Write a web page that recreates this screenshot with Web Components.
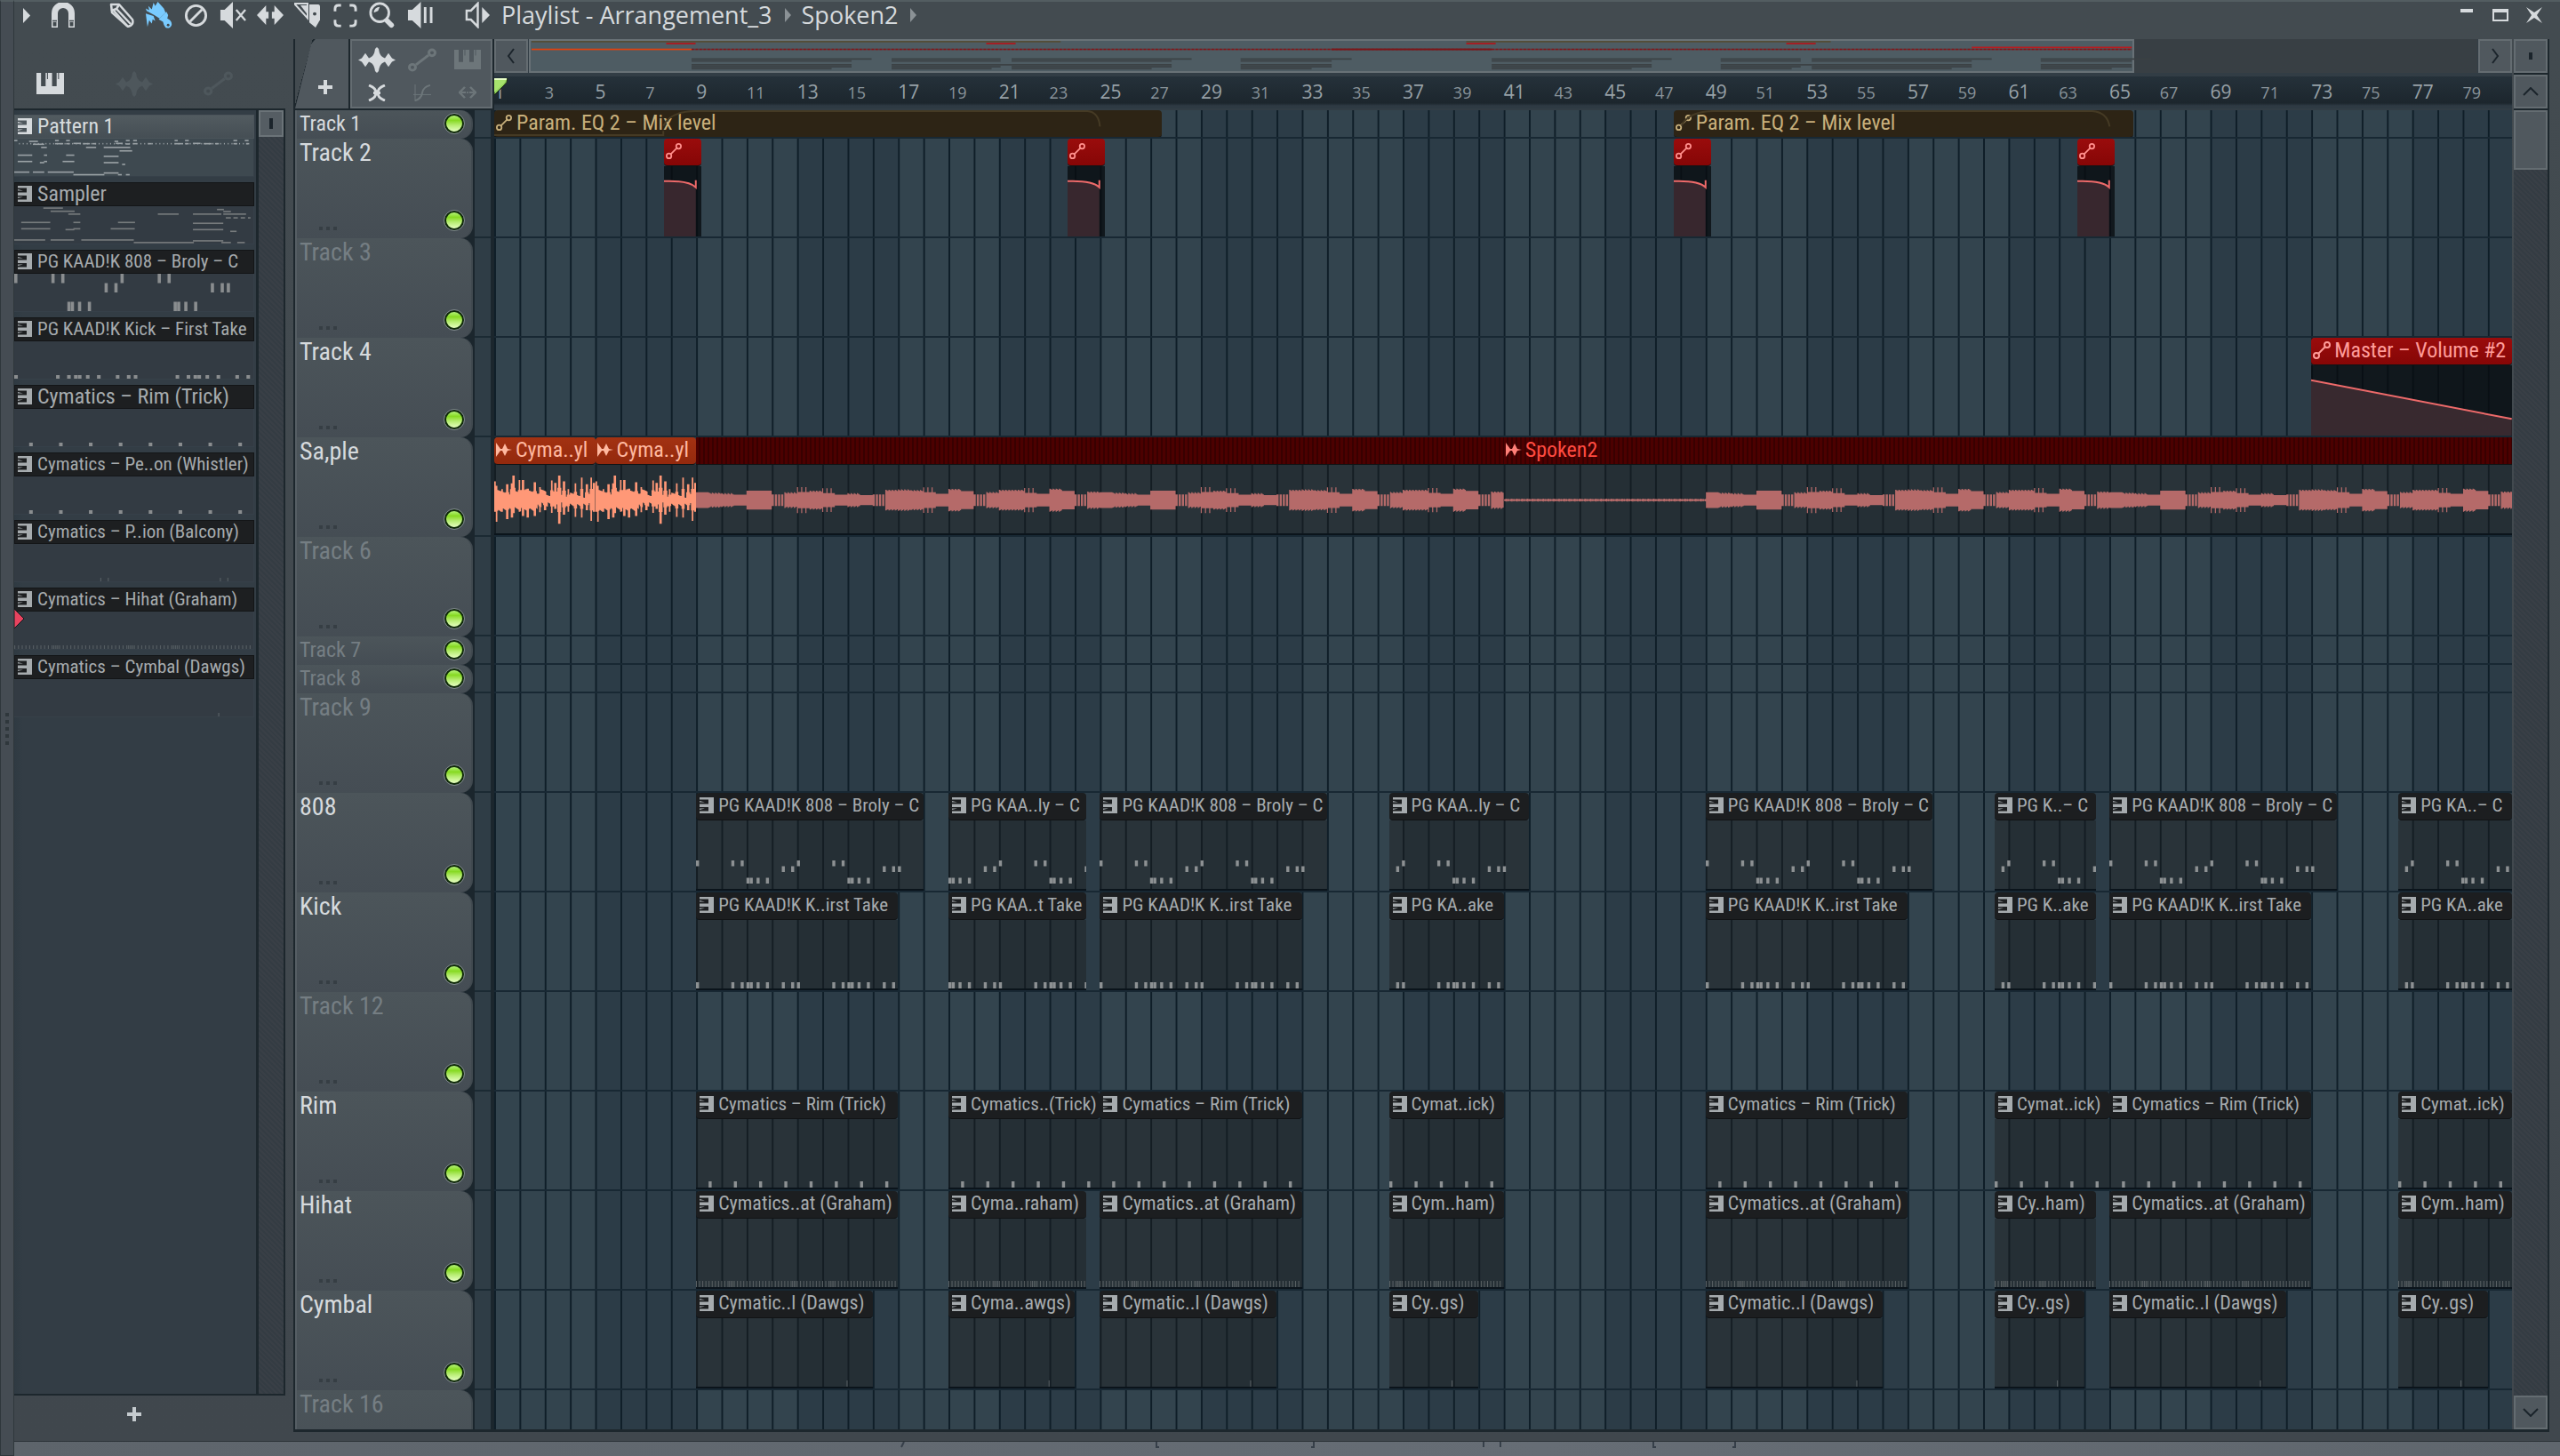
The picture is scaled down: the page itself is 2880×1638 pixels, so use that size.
<!DOCTYPE html>
<html lang="en">
<head>
<meta charset="utf-8">
<title>Playlist - Arrangement_3</title>
<style>
    html, body {
        margin: 0;
        height: 100%;
        overflow: hidden;
        background: #40484d;
    }
    body {
        font-family: "Roboto Condensed", "Open Sans Condensed", "Liberation Sans", sans-serif;
        color: #d6dadd;
    }
</style>
</head>
<body>
<playlist-window></playlist-window>

<script>
const BARS = 79.95;

// viewBox + markup of every glyph used in the window
const ICONS = {
    play: ['0 0 10 18', '<path d="M0 0L9 9L0 18Z" fill="currentColor"/>'],
    magnet: ['0 0 26 28', '<path d="M3.500 28V12a9.500 9.500 0 0 1 19 0V28" fill="none" stroke="currentColor" stroke-width="7"/><path d="M1 20.500h5M20 20.500h5" stroke="#40484d" stroke-width="1.500"/><path d="M1.500 22h4v4.500h-4zM20.500 22h4v4.500h-4z" fill="#40484d"/>'],
    pencil: ['0 0 28 28', '<g fill="none" stroke="currentColor" stroke-width="2.500" stroke-linejoin="round"><path d="M2 2L11 2L26 19Q28 25 21 27L3 11Z"/><path d="M11 2L8 7L2 9M8 7L24 24M5 9L20 26"/></g>'],
    brush: ['0 0 32 32', '<path d="M10 1L12 5L15 0L22 8L24 13L17 20L11 16L2 11L1 8L5 10L4 5L8 9Z" fill="currentColor"/><path d="M16 21L25 12L27 16L26 20Q32 23 31 28Q29 33 24 31Q22 29 21 24Z" fill="currentColor"/><path d="M1 14L10 17L12 23L9 21L8 26L5 22L3 30Z" fill="currentColor"/><circle cx="27" cy="28" r="1.500" fill="#40484d"/>'],
    ban: ['0 0 28 28', '<circle cx="14" cy="14" r="11.500" fill="none" stroke="currentColor" stroke-width="3"/><path d="M7 21L21 7" stroke="currentColor" stroke-width="3"/>'],
    mute: ['0 0 32 30', '<path d="M1 9h5L16 0V30L6 21H1Z" fill="currentColor"/><path d="M20 9L31 21M31 9L20 21" stroke="currentColor" stroke-width="2.500"/>'],
    slip: ['0 0 32 26', '<path d="M0 13L11 1V9h3V17h-3V25ZM32 13L21 1V9h-3V17h3V25Z" fill="currentColor"/>'],
    knife: ['0 0 30 30', '<path d="M0 1L15 18V1Z" fill="none" stroke="currentColor" stroke-width="2"/><path d="M7 3L15 14V3Z" fill="currentColor"/><path d="M17 2h10q2 0 2 3V20L24 29L17 23Z" fill="currentColor"/><circle cx="23" cy="13" r="2" fill="#40484d"/>'],
    select: ['0 0 28 28', '<path d="M2 9V6q0-4 4-4h3M19 2h3q4 0 4 4v3M26 19v3q0 4-4 4h-3M9 26H6q-4 0-4-4v-3" fill="none" stroke="currentColor" stroke-width="3"/>'],
    zoom: ['0 0 32 32', '<circle cx="13" cy="13" r="11" fill="none" stroke="currentColor" stroke-width="3"/><path d="M6 13A7 7 0 0 1 13 6L11 11Z" fill="currentColor"/><path d="M22 23L27 28" stroke="currentColor" stroke-width="6" stroke-linecap="round"/>'],
    playback: ['0 0 30 30', '<path d="M1 9h5L16 0V30L6 21H1Z" fill="currentColor"/><path d="M21 6V24M28 6V24" stroke="currentColor" stroke-width="3"/>'],
    speaker: ['0 0 30 30', '<path d="M2 10h5L15 2V28L7 20H2Z" fill="none" stroke="currentColor" stroke-width="2.500"/><path d="M20 6L29 15L20 24Z" fill="currentColor"/>'],
    piano: ['0 0 30 24', '<path d="M0 0h5V15h5V0h1.500V7l1 0V0H17l0 0V15h5V0h1.500V7h1V0H30V24H0Z" fill="currentColor"/>'],
    wave: ['0 0 42 30', '<path d="M0 15L4 13L8 7L12 13L14 12Q18 10 19 2L21 0L23 2Q24 10 28 12L30 13L34 7L38 13L42 15L38 17L34 23L30 17L28 18Q24 20 23 28L21 30L19 28Q18 20 14 18L12 17L8 23L4 17Z" fill="currentColor"/>'],
    automation: ['0 0 32 28', '<g fill="none" stroke="currentColor" stroke-width="3"><circle cx="5" cy="22.500" r="3.500"/><circle cx="27" cy="5.500" r="3.500"/><path d="M9 19.500L23 8.500"/></g>'],
    cross: ['0 0 20 20', '<path d="M1 1Q9 4 9 10T1 19M19 1Q11 4 11 10T19 19M6 10h8" fill="none" stroke="currentColor" stroke-width="3"/>'],
    curve: ['0 0 20 20', '<path d="M2 0V20M0 12H20" stroke="currentColor" stroke-width="1"/><path d="M2 19Q9 17 10 10T19 1" fill="none" stroke="currentColor" stroke-width="2"/>'],
    stretch: ['0 0 20 16', '<path d="M7 1L1 8L7 15M13 1L19 8L13 15M3 8H8M12 8H17" fill="none" stroke="currentColor" stroke-width="2.500"/><path d="M9 7h2v2h-2z" fill="currentColor"/>'],
    plus: ['0 0 16 16', '<path d="M8 0V16M0 8H16" stroke="currentColor" stroke-width="4"/>'],
    left: ['0 0 10 18', '<path d="M8 1L2 9L8 17" fill="none" stroke="currentColor" stroke-width="2"/>'],
    right: ['0 0 10 18', '<path d="M2 1L8 9L2 17" fill="none" stroke="currentColor" stroke-width="2"/>'],
    up: ['0 0 18 10', '<path d="M1 9L9 1L17 9" fill="none" stroke="currentColor" stroke-width="2"/>'],
    down: ['0 0 18 10', '<path d="M1 1L9 9L17 1" fill="none" stroke="currentColor" stroke-width="2"/>'],
    grip: ['0 0 4 12', '<path d="M0 0h4v12H0z" fill="currentColor"/>'],
    minimize: ['0 0 18 18', '<path d="M2 2h14v4H2z" fill="currentColor"/>'],
    maximize: ['0 0 18 14', '<path d="M1 2h16v11H1z" fill="none" stroke="currentColor" stroke-width="2"/><path d="M0 0h18v4H0z" fill="currentColor"/>'],
    close: ['0 0 18 18', '<path d="M0 0L9 6L18 0L12 9L18 18L9 12L0 18L6 9Z" fill="currentColor"/>'],
    pattern: ['0 0 16 18', '<path d="M0 0H16V18H0V15.500H10V11H0V7.500H10V2.500H0Z" fill="currentColor"/><path d="M0 4L6 5.500H0ZM0 14L6 12.500H0Z" fill="currentColor"/>'],
    clipAuto: ['0 0 20 20', '<g fill="none" stroke="currentColor" stroke-width="2"><circle cx="4" cy="16" r="3"/><circle cx="16" cy="4" r="3"/><path d="M6 14L14 6"/></g>'],
    clipAudio: ['0 0 18 16', '<path d="M0 0L5 7L7 7L10 1L13 7L18 8L13 9L10 15L7 9L5 9L0 16Z" fill="currentColor"/>']
};

function icon(name, width, height) {
    const [box, body] = ICONS[name];
    return `<svg width="${width}" height="${height}" viewBox="${box}" preserveAspectRatio="none" aria-hidden="true">${body}</svg>`;
}

// step times, in bars
const HIGH = [0, 1.4, 1.77, 4, 5.4, 5.77];
const MID = [3.4, 3.77, 7.4, 7.77, 8];
const LOW = [2, 2.13, 2.4, 2.77, 6, 6.13, 6.4, 6.77];

function notesOf(kind) {
    if (kind === '808') {
        return [...HIGH.map(t => [t, 0]), ...MID.map(t => [t, 1]), ...LOW.map(t => [t, 3])];
    }
    if (kind === 'kick') return [...HIGH, ...MID.slice(0, 4), ...LOW].map(t => [t, 0]);
    if (kind === 'rim') return [0, 1, 2, 3, 4, 5, 6, 7].map(t => [t + 0.5, 0]);
    if (kind === 'hihat') {
        const ticks = [];
        for (let i = 0; i < 64; i++) ticks.push([i / 8, 0]);
        [10, 11, 30, 31, 42, 43].forEach(i => ticks.push([i / 8 + 0.06, 0]));
        return ticks;
    }
    if (kind === 'perc') return [2.88, 3.13, 6.88, 7.13].map(t => [t, 0]);
    if (kind === 'cymbal') return [[5.97, 0]];
    return [];
}

function notesSvg(kind, offset, length) {
    const rows = kind === '808' ? 4 : 1;
    const thin = ['hihat', 'perc', 'cymbal'].includes(kind);
    const width = thin ? 0.035 : 0.12;
    const rects = notesOf(kind)
        .filter(([t]) => t >= offset && t < offset + length)
        .map(([t, row]) => `<rect x="${(t - offset).toFixed(3)}" y="${row}" width="${width}" height="1"/>`)
        .join('');
    return `<svg class="notes ${thin ? 'thin' : ''} rows${rows}" viewBox="0 0 ${length} ${rows}" preserveAspectRatio="none">${rects}</svg>`;
}

// half heights for each half bar of the vocal, over 16 bars: [height, shape]
const VOCAL = [
    [27], [26, 'j'], [24, 'j'], [19], [33], [33], [20, 's'], [27, 'j'],
    [28, 'p'], [33, 'j'], [24, 'p'], [19], [24, 'j'], [17], [20, 's'], [36, 'j'],
    [37, 'j'], [35, 'j'], [27, 'p'], [22], [39, 'j'], [31], [20, 's'], [28, 'j'],
    [36, 'j'], [36, 'j'], [25, 'p'], [22], [40, 'j'], [32], [20, 's'], [30, 'j']
];

function vocalPath(from, to) {
    let d = '';
    const step = 1 / 24;
    for (let i = 0; i < (to - from) * 24; i++) {
        const bar = from + i * step;
        const x = (i * step).toFixed(3);
        let h;
        if (bar >= 41 && bar < 49) {
            h = 3 + (i * 7 % 5) * 0.5;
        } else {
            const start = bar < 41 ? 9 : 49;
            const [height, shape] = VOCAL[Math.floor((bar - start) * 2 + 0.001) % 32];
            h = height;
            if (shape === 'j') h -= (i % 3) * 2;
            if (shape === 'p' && i % 4 === 0) h += 17;
            if (shape === 's' && i % 3 === 2) h = 0;
        }
        if (h) d += `M${x} ${50 - h}h${(step * 1.05).toFixed(3)}V${50 + h}h${(-step * 1.05).toFixed(3)}Z`;
    }
    return d;
}

// peaks of the four bar sample: position, up, down
const PEAKS = [
    [0, 65, 40], [5, 50, 75], [19, 38, 40], [32, 55, 66], [48, 85, 45], [44, 58, 60], [63, 70, 40], [72, 70, 55],
    [84, 40, 60], [102, 62, 55], [115, 45, 42], [128, 30, 35], [145, 68, 44], [154, 60, 30], [164, 85, 82],
    [176, 65, 50], [187, 38, 40], [205, 58, 58], [221, 78, 60], [234, 55, 35], [245, 78, 72], [252, 60, 40]
];

function drumPath() {
    let d = '';
    for (let i = 0; i < 128; i++) {
        const x = i * 2;
        let up = 8 + (i * 37 % 19) + (x < 130 ? 12 : 0);
        let down = 8 + (i * 53 % 17) + (x < 110 ? 16 : 0);
        PEAKS.forEach(([at, u, v]) => {
            const near = Math.abs(at - x);
            if (near < 3) {
                up = Math.max(up, u);
                down = Math.max(down, v);
            } else if (near < 5) {
                up = Math.max(up, u * 0.5);
                down = Math.max(down, v * 0.5);
            }
        });
        d += `M${x} ${100 - up}h2V${100 + down}h-2Z`;
    }
    return d;
}

const PIANO_CLIPS = {
    '808': [[9, 18, 0, 'PG KAAD!K 808 – Broly – C'], [19, 24.45, 2, 'PG KAA..ly – C'], [25, 34, 0, 'PG KAAD!K 808 – Broly – C'], [36.45, 42, 3.5, 'PG KAA..ly – C'], [49, 58, 0, 'PG KAAD!K 808 – Broly – C'], [60.45, 64.45, 3.5, 'PG K..– C'], [65, 74, 0, 'PG KAAD!K 808 – Broly – C'], [76.45, 82, 3.5, 'PG KA..– C']],
    kick: [[9, 17, 0, 'PG KAAD!K K..irst Take'], [19, 24.45, 2, 'PG KAA..t Take'], [25, 33, 0, 'PG KAAD!K K..irst Take'], [36.45, 41, 3.5, 'PG KA..ake'], [49, 57, 0, 'PG KAAD!K K..irst Take'], [60.45, 64.45, 3.5, 'PG K..ake'], [65, 73, 0, 'PG KAAD!K K..irst Take'], [76.45, 81, 3.5, 'PG KA..ake']],
    rim: [[9, 17, 0, 'Cymatics – Rim (Trick)'], [19, 25, 2, 'Cymatics..(Trick)'], [25, 33, 0, 'Cymatics – Rim (Trick)'], [36.45, 41, 3.5, 'Cymat..ick)'], [49, 57, 0, 'Cymatics – Rim (Trick)'], [60.45, 65, 3.5, 'Cymat..ick)'], [65, 73, 0, 'Cymatics – Rim (Trick)'], [76.45, 81, 3.5, 'Cymat..ick)']],
    hihat: [[9, 17, 0, 'Cymatics..at (Graham)'], [19, 24.45, 2, 'Cyma..raham)'], [25, 33, 0, 'Cymatics..at (Graham)'], [36.45, 41, 3.5, 'Cym..ham)'], [49, 57, 0, 'Cymatics..at (Graham)'], [60.45, 64.45, 3.5, 'Cy..ham)'], [65, 73, 0, 'Cymatics..at (Graham)'], [76.45, 81, 3.5, 'Cym..ham)']],
    cymbal: [[9, 16, 0, 'Cymatic..l (Dawgs)'], [19, 24, 2, 'Cyma..awgs)'], [25, 32, 0, 'Cymatic..l (Dawgs)'], [36.45, 40, 3.5, 'Cy..gs)'], [49, 56, 0, 'Cymatic..l (Dawgs)'], [60.45, 64, 3.5, 'Cy..gs)'], [65, 72, 0, 'Cymatic..l (Dawgs)'], [76.45, 80, 3.5, 'Cy..gs)']]
};

function pianoTrack(name, kind) {
    return {
        name,
        clips: PIANO_CLIPS[kind].map(([from, to, offset, label]) => ({ type: 'piano', kind, from, to, offset, label }))
    };
}

const TRACKS = [
    { name: 'Track 1', small: true, clips: [
        { type: 'param', from: 1, to: 27.45, label: 'Param. EQ 2 – Mix level', bend: 7.73 },
        { type: 'param', from: 47.73, to: 65.95, label: 'Param. EQ 2 – Mix level', bend: 1 }
    ] },
    { name: 'Track 2', clips: [7.73, 23.73, 47.73, 63.73].map(from => ({ type: 'fade', from, to: from + 1.47, label: '' })) },
    { name: 'Track 3', idle: true },
    { name: 'Track 4', clips: [{ type: 'volume', from: 73, to: 81, label: 'Master – Volume #2' }] },
    { name: 'Sa,ple', clips: [
        { type: 'drums', from: 1, to: 5, label: 'Cyma..yl' },
        { type: 'drums', from: 5, to: 9, label: 'Cyma..yl' },
        { type: 'vocal', from: 9, to: 41, label: '' },
        { type: 'vocal', from: 41, to: 81, label: 'Spoken2' }
    ] },
    { name: 'Track 6', idle: true },
    { name: 'Track 7', idle: true, small: true },
    { name: 'Track 8', idle: true, small: true },
    { name: 'Track 9', idle: true },
    pianoTrack('808', '808'),
    pianoTrack('Kick', 'kick'),
    { name: 'Track 12', idle: true },
    pianoTrack('Rim', 'rim'),
    pianoTrack('Hihat', 'hihat'),
    pianoTrack('Cymbal', 'cymbal'),
    { name: 'Track 16', idle: true }
];

// x, y, width of the dashes in the two melodic previews
const MELODY = {
    first: [[45, 4, 10], [92, 7, 28], [104, 17, 36], [130, 28, 18], [174, 4, 12], [209, 4, 12], [174, 15, 26], [209, 15, 12], [232, 14, 24], [262, 15, 22], [292, 15, 12], [272, 28, 32], [362, 7, 12], [366, 14, 22], [398, 4, 12], [398, 16, 12], [328, 28, 84], [378, 40, 40], [421, 4, 12], [421, 15, 12], [468, 15, 12], [552, 4, 10], [585, 4, 12], [552, 15, 24], [585, 15, 12], [610, 14, 24], [644, 15, 26], [680, 15, 12], [738, 4, 12], [738, 15, 12], [774, 4, 12], [778, 15, 10], [56, 55, 46], [139, 55, 10], [209, 55, 26], [328, 59, 47], [56, 77, 46], [126, 81, 14], [139, 77, 10], [198, 77, 37], [328, 81, 47], [386, 87, 10], [45, 114, 48], [104, 114, 36], [151, 114, 82], [232, 123, 98], [328, 117, 47], [373, 123, 12], [398, 123, 12]],
    second: [[137, 4, 62], [160, 15, 76], [216, 25, 38], [499, 25, 66], [686, 9, 22], [706, 16, 24], [610, 25, 90], [706, 25, 72], [714, 38, 16], [738, 38, 14], [761, 38, 14], [784, 38, 8], [67, 54, 92], [232, 54, 22], [373, 54, 54], [610, 57, 96], [67, 76, 92], [207, 79, 28], [232, 76, 22], [350, 76, 76], [610, 79, 96], [728, 85, 20], [45, 115, 98], [160, 115, 74], [257, 115, 166], [423, 124, 190], [610, 118, 96], [700, 124, 30], [750, 124, 24]]
};

function melodySvg(name) {
    const dots = [];
    if (name === 'first') {
        for (let x = 60; x < 790; x += 12) dots.push([x, 15, 3]);
    }
    const rects = [...MELODY[name], ...dots]
        .map(([x, y, w]) => `<rect x="${x}" y="${y}" width="${w}" height="5"/>`).join('');
    return `<svg class="melody" viewBox="45 0 756 130" preserveAspectRatio="none">${rects}</svg>`;
}

const PATTERNS = [
    { name: 'Pattern 1', melody: 'first', active: true, wide: true },
    { name: 'Sampler', melody: 'second', wide: true },
    { name: 'PG KAAD!K 808 – Broly – C', kind: '808', bars: 9 },
    { name: 'PG KAAD!K Kick – First Take', kind: 'kick', bars: 8 },
    { name: 'Cymatics – Rim (Trick)', kind: 'rim', bars: 8, wide: true },
    { name: 'Cymatics – Pe..on (Whistler)', kind: 'rim', bars: 8 },
    { name: 'Cymatics – P..ion (Balcony)', kind: 'perc', bars: 8 },
    { name: 'Cymatics – Hihat (Graham)', kind: 'hihat', bars: 8, playing: true },
    { name: 'Cymatics – Cymbal (Dawgs)', kind: 'cymbal', bars: 7 }
];

const BASE = `
    *, *::before, *::after { box-sizing: border-box; }
    svg { display: block; flex: none; }
    button { all: unset; box-sizing: border-box; display: flex; align-items: center; justify-content: center; cursor: pointer; }
`;

class PlaylistClip extends HTMLElement {

    constructor() {
        super();
        this.attachShadow({ mode: 'open' });
    }

    set clip(clip) {
        this._clip = clip;
        this.render();
    }

    render() {
        const { type, kind, from, to, label } = this._clip;
        const end = Math.min(to, BARS + 1);
        this.style.left = `${(from - 1) / BARS * 100}%`;
        this.style.width = `${(end - from) / BARS * 100}%`;
        this.setAttribute('type', type);
        this.toggleAttribute('tight', ['808', 'kick', 'rim'].includes(kind));
        const glyph = { piano: ['pattern', 16, 18], param: ['clipAuto', 18, 18], fade: ['clipAuto', 18, 18], volume: ['clipAuto', 20, 20], drums: ['clipAudio', 18, 16], vocal: ['clipAudio', 18, 16] }[type];
        const bare = type === 'vocal' && !label;

        this.shadowRoot.innerHTML = `
            <style>
                ${BASE}
                :host { position: absolute; top: 0; bottom: 0; display: flex; flex-direction: column; overflow: hidden; }
                .head {
                    display: flex; align-items: center; gap: 4px; height: 31px; padding: 0 0 2px 2px; flex: none;
                    font-size: 24px; line-height: 28px; white-space: nowrap; border-radius: 4px;
                    color: #a6abae; background: #1c1e20; border-bottom: 1px solid #111315;
                }
                .body { flex: 1; min-height: 0; display: flex; flex-direction: column; justify-content: flex-end; }
                .body > svg { width: 100%; }
                .notes { fill: #8d9193; height: 7px; }
                .rows4 { height: 26px; margin-bottom: 6px; }
                .thin { fill: #5b6265; }
                :host([type=piano]) .head { font-size: 22px; gap: 5px; padding-left: 4px; }
                :host([tight]) .head { font-size: 21px; }
                :host([type=piano]) .body { background: rgba(27, 28, 28, .4); border-bottom: 2px solid #0b141b; }
                :host([type=param]) .head { position: relative; gap: 5px; color: #c8b07c; background: #2d2415; }
                .curve { position: absolute; inset: 0; width: 100%; height: 100%; }
                :host([type=fade]) .head, :host([type=volume]) .head { color: #ff8f8c; background: linear-gradient(#9a0c0c, #860606); }
                :host([type=volume]) .head { color: #ff9c99; }
                :host([type=fade]) .body, :host([type=volume]) .body { background: rgba(8, 11, 16, .78); }
                :host([type=fade]) .body svg, :host([type=volume]) .body svg { height: 100%; }
                :host([type=drums]) .head { color: #ffb9a0; background: linear-gradient(#a33212, #93290d); }
                :host([type=vocal]) .head { color: #ff4b40; border-radius: 0; background: repeating-linear-gradient(90deg, #4c0000 0 3px, #380000 3px 5px); }
                :host([type=vocal]) .head svg { color: #ff8078; }
                :host([type=drums]) .body, :host([type=vocal]) .body { background: rgba(27, 28, 28, .4); border-bottom: 2px solid #0b141b; }
                :host([type=drums]) .body svg, :host([type=vocal]) .body svg { height: 100%; }
            </style>
            <div class="head">${bare ? '' : icon(...glyph)}<span>${label}</span>${this.curve()}</div>
            ${type === 'param' ? '' : `<div class="body">${this.content()}</div>`}
        `;
    }

    curve() {
        const { type, from, to, bend } = this._clip;
        if (type !== 'param') return '';
        const length = to - from;
        const fall = length - 0.95;
        const low = bend > 1 ? `M0 29H6.700V24` : 'M0 29';
        const start = bend > 1 ? 6.7 : 0.3;
        return `<svg class="curve" viewBox="0 0 ${length} 31" preserveAspectRatio="none"><path d="${low}M${start} 18Q${start + 0.3} 1 ${start + 1.3} 1H${bend > 1 ? 23.5 : fall - 0.7}Q${bend > 1 ? 23.95 : fall - 0.1} 2 ${bend > 1 ? 24 : fall} 19" fill="none" stroke="#453a24" stroke-width="2" vector-effect="non-scaling-stroke"/></svg>`;
    }

    content() {
        const { type, kind, from, to, offset } = this._clip;
        const end = Math.min(to, BARS + 1);
        if (type === 'piano') return notesSvg(kind, offset, end - from);
        if (type === 'fade') {
            return `<svg viewBox="0 0 42 80" preserveAspectRatio="none"><path d="M0 17Q28 16 36 24V80H0Z" fill="#38272e"/><path d="M0 17Q28 16 36 24V16" fill="none" stroke="#ee6a6a" stroke-width="2"/></svg>`;
        }
        if (type === 'volume') {
            return `<svg viewBox="0 0 226 80" preserveAspectRatio="none"><path d="M0 17L226 61V80H0Z" fill="#38292f"/><path d="M0 17L226 61" fill="none" stroke="#ee6a6a" stroke-width="2"/></svg>`;
        }
        if (type === 'drums') {
            return `<svg viewBox="0 -22 256 237" preserveAspectRatio="none"><path d="${drumPath()}" fill="#ff9877"/></svg>`;
        }
        return `<svg viewBox="0 -72 ${end - from} 237" preserveAspectRatio="none"><path d="${vocalPath(from, end)}" fill="#b56a69"/></svg>`;
    }
}

class PlaylistTrack extends HTMLElement {

    constructor() {
        super();
        this.attachShadow({ mode: 'open' });
    }

    set track(track) {
        this._track = track;
        this.render();
    }

    render() {
        const { name, small, idle, clips = [] } = this._track;
        this.toggleAttribute('small', !!small);
        this.toggleAttribute('idle', !!idle);
        this.shadowRoot.innerHTML = `
            <style>
                ${BASE}
                :host { display: grid; grid-template-columns: 200px 2px 18px 4px 1fr; height: 112px; flex: none; }
                :host([small]) { height: 32px; }
                .header {
                    display: flex; flex-direction: column; justify-content: space-between; padding: 0 8px 9px 3px;
                    background: linear-gradient(#4c555a, #454d54); border-left: 2px solid #565e64; border-right: 2px solid #40494f;
                    border-radius: 0 14px 14px 0;
                }
                .name { font-size: 28px; line-height: 32px; white-space: nowrap; }
                .foot { display: flex; align-items: center; justify-content: space-between; padding-left: 22px; }
                .dots { display: flex; gap: 4px; padding-top: 18px; }
                .dots i { width: 4px; height: 4px; background: #363e44; }
                .led {
                    width: 22px; height: 22px; border-radius: 50%; border: 2px solid #0f2a08; outline: 1px solid #7f888c; outline-offset: 0;
                    background: linear-gradient(#b5f47a, #86d922 30%, #b5ec70 60%, #e6ffc0);
                }
                :host([small]) .header { flex-direction: row; padding-bottom: 2px; align-items: center; }
                :host([small]) .name { font-size: 24px; line-height: 28px; }
                :host([small]) .dots { display: none; }
                :host([idle]) .name { color: #757e83; }
                .gutter { grid-column: 3; background: #2f3d46; border-bottom: 2px solid #1b2a33; }
                .lane {
                    grid-column: 5; position: relative; border-bottom: 2px solid #182833;
                    background:
                        linear-gradient(90deg, #0f1e28 2px, transparent 2px) 0 0 / calc(100% / ${BARS}) 100%,
                        linear-gradient(90deg, #33444e 50%, #2c3c47 50%) 0 0 / calc(800% / ${BARS}) 100%;
                }
            </style>
            <div class="header">
                <span class="name">${name}</span>
                <div class="foot">
                    <div class="dots"><i></i><i></i><i></i></div>
                    <button class="led" aria-label="Mute ${name}"></button>
                </div>
            </div>
            <div class="gutter"></div>
            <div class="lane"></div>
        `;
        const lane = this.shadowRoot.querySelector('.lane');
        clips.forEach(clip => {
            const el = document.createElement('playlist-clip');
            el.clip = clip;
            lane.append(el);
        });
    }
}

class PatternItem extends HTMLElement {

    constructor() {
        super();
        this.attachShadow({ mode: 'open' });
    }

    set pattern(pattern) {
        this._pattern = pattern;
        this.render();
    }

    render() {
        const { name, melody, kind, bars, active, playing, wide } = this._pattern;
        this.toggleAttribute('active', !!active);
        this.toggleAttribute('wide', !!wide);
        this.shadowRoot.innerHTML = `
            <style>
                ${BASE}
                :host { display: block; position: relative; height: 70px; }
                button { width: 100%; height: 27px; justify-content: flex-start; gap: 6px; padding: 0 0 2px 3px; font-size: 21px; line-height: 24px; white-space: nowrap; color: #a6abae; background: #1d1f21; border: 1px solid #131517; }
                .preview { height: 43px; display: flex; flex-direction: column; justify-content: flex-end; background: #333b43; border: 1px solid #364049; border-width: 0 1px 1px 0; }
                svg.notes, svg.melody { width: 100%; }
                .melody { height: 42px; fill: #777b7d; }
                .notes { height: 4px; fill: #8a8d8f; }
                .rows4 { height: 42px; }
                .thin { fill: #555d62; }
                :host([wide]) button { font-size: 24px; }
                :host([active]) button { color: #d6dadd; background: linear-gradient(#525b60, #454e54); border-color: #4b545a; }
                :host([active]) .preview { background: #3e4950; }
                :host([active]) .melody { fill: #9aa1a5; }
                .marker { position: absolute; left: 0; top: 23px; }
            </style>
            <button>${icon('pattern', 16, 18)}<span>${name}</span></button>
            <div class="preview">${melody ? melodySvg(melody) : notesSvg(kind, 0, bars)}</div>
            ${playing ? '<svg class="marker" width="12" height="24" viewBox="0 0 12 24"><path d="M0 1L11 12L0 23Z" fill="#e8435f" stroke="#14181b"/></svg>' : ''}
        `;
    }
}

class PatternPicker extends HTMLElement {

    constructor() {
        super();
        this.attachShadow({ mode: 'open' });
        this.shadowRoot.innerHTML = `
            <style>
                ${BASE}
                :host { display: flex; flex-direction: column; width: 305px; flex: none; }
                .tabs { display: flex; height: 78px; padding: 22px 59px 0 25px; justify-content: space-between; align-items: center; color: #4e575c; }
                .tabs button:first-child { color: #d6dadd; }
                .main { display: flex; flex: 1; min-height: 0; border: 2px solid #1d272d; border-left: 0; }
                .list { flex: 1; min-width: 0; display: flex; flex-direction: column; gap: 6px; padding: 5px 2px 0 0; background: linear-gradient(90deg, #2f3a42, #333d45 10px); border-right: 3px solid #1d272d; }
                .bar { width: 28px; flex: none; background: repeating-linear-gradient(45deg, #343c43 0 2px, #393f46 2px 4px); }
                .bar button { width: 28px; height: 30px; background: #555d63; border: 2px solid #6b7378; color: #1b242b; }
                .add { height: 42px; width: 270px; margin-bottom: 9px; color: #c4cace; }
            </style>
            <div class="tabs">
                <button aria-label="Patterns">${icon('piano', 31, 24)}</button>
                <button aria-label="Audio">${icon('wave', 42, 29)}</button>
                <button aria-label="Automation">${icon('automation', 33, 28)}</button>
            </div>
            <div class="main">
                <div class="list"></div>
                <div class="bar"><button aria-label="Scroll patterns">${icon('grip', 4, 12)}</button></div>
            </div>
            <button class="add" aria-label="Add pattern">${icon('plus', 16, 16)}</button>
        `;
        const list = this.shadowRoot.querySelector('.list');
        PATTERNS.forEach(pattern => {
            const item = document.createElement('pattern-item');
            item.pattern = pattern;
            list.append(item);
        });
    }
}

class PlaylistToolbar extends HTMLElement {

    constructor() {
        super();
        this.attachShadow({ mode: 'open' });
        this.shadowRoot.innerHTML = `
            <style>
                ${BASE}
                :host { display: flex; align-items: center; height: 44px; padding: 0 20px 12px 10px; flex: none; border-top: 2px solid #535d61; background: #434b50; }
                .tools { display: flex; }
                .tools button { width: 42px; height: 30px; }
                .tools .menu { width: 8px; }
                .tools .snap { width: 73px; }
                .tools .pencil { width: 50px; padding-left: 10px; }
                .tools .on { color: #79cbff; }
                .title { display: flex; align-items: center; gap: 14px; flex: 1; padding-left: 30px; }
                .title .sep { color: #8b9296; }
                .title span { font: 27px/30px "Open Sans", sans-serif; white-space: nowrap; }
                .title span:first-of-type { margin-left: -2px; }
                .title .sep:nth-of-type(2) { margin-right: -2px; }
                .win { display: flex; gap: 20px; }
            </style>
            <div class="tools">
                <button class="menu" aria-label="Menu">${icon('play', 9, 17)}</button>
                <button class="snap" aria-label="Snap">${icon('magnet', 26, 28)}</button>
                <button class="pencil" aria-label="Draw">${icon('pencil', 28, 28)}</button>
                <button class="on" aria-label="Paint">${icon('brush', 31, 30)}</button>
                <button aria-label="Delete">${icon('ban', 27, 27)}</button>
                <button aria-label="Mute">${icon('mute', 30, 30)}</button>
                <button aria-label="Slip">${icon('slip', 30, 24)}</button>
                <button aria-label="Slice">${icon('knife', 30, 29)}</button>
                <button aria-label="Select">${icon('select', 27, 27)}</button>
                <button aria-label="Zoom">${icon('zoom', 30, 30)}</button>
                <button aria-label="Playback">${icon('playback', 29, 30)}</button>
            </div>
            <div class="title">
                ${icon('speaker', 29, 30)}
                <span>Playlist - Arrangement_3</span>
                <svg class="sep" width="7" height="16" viewBox="0 0 7 16"><path d="M0 0L7 8L0 16Z" fill="currentColor"/></svg>
                <span>Spoken2</span>
                <svg class="sep" width="7" height="16" viewBox="0 0 7 16"><path d="M0 0L7 8L0 16Z" fill="currentColor"/></svg>
            </div>
            <div class="win">
                <button aria-label="Minimize">${icon('minimize', 18, 18)}</button>
                <button aria-label="Maximize">${icon('maximize', 18, 14)}</button>
                <button aria-label="Close">${icon('close', 18, 18)}</button>
            </div>
        `;
    }
}

class PlaylistMap extends HTMLElement {

    constructor() {
        super();
        this.attachShadow({ mode: 'open' });
        const colors = { piano: '#3b4144', param: '#554d37', fade: '#b3151b', volume: '#b81c20', drums: '#e2420f' };
        let rects = '';
        TRACKS.forEach((track, row) => (track.clips || []).forEach(({ type, from, to }) => {
            let fill = colors[type];
            if (type === 'vocal') fill = 'url(#dash)';
            rects += `<rect x="${from - 1}" y="${row * 2.3}" width="${to - from}" height="1.8" fill="${fill}"/>`;
        }));
        this.shadowRoot.innerHTML = `
            <style>
                ${BASE}
                :host { display: flex; flex: 1; background: #383f44; }
                .view { width: 82.4%; background: #4e5c63; border: 2px solid #687176; padding: 0 1px; }
                svg { width: 100%; height: 100%; overflow: visible; }
            </style>
            <div class="view">
                <svg viewBox="0 0 80 36" preserveAspectRatio="none">
                    <defs><pattern id="dash" width=".2" height="4" patternUnits="userSpaceOnUse"><rect width=".2" height="4" fill="#5a3a3e"/><rect width=".12" height="4" fill="#821418"/></pattern></defs>
                    ${rects}
                    <rect x="40" y="9.200" width="8" height="1.800" fill="#7c1417"/>
                </svg>
            </div>
        `;
    }
}

class TimeRuler extends HTMLElement {

    constructor() {
        super();
        this.attachShadow({ mode: 'open' });
        let numbers = '';
        for (let bar = 1; bar < BARS; bar += 2) {
            numbers += `<span class="${bar % 4 === 1 ? 'major' : ''}">${bar}</span>`;
        }
        this.shadowRoot.innerHTML = `
            <style>
                ${BASE}
                :host { display: block; position: relative; height: 36px; overflow: hidden; background: linear-gradient(#25313a, #1c262d 30px, #2e3a43 33px); }
                .numbers { display: grid; grid-template-columns: repeat(40, calc(200% / ${BARS})); align-items: baseline; }
                span { font: 18px/34px "Open Sans", sans-serif; color: #8a949b; white-space: nowrap; }
                .major { font-size: 21px; color: #97a1a7; }
                .head { position: absolute; left: 0; top: 2px; }
            </style>
            <div class="numbers">${numbers}</div>
            <svg class="head" width="16" height="19" viewBox="0 0 16 19"><path d="M0 0H15Q15 5 11 8L0 19Z" fill="#8fcf57" stroke="#1a2613"/><path d="M0 1H14L11 6L0 16Z" fill="#a7e36d"/><path d="M0 1H14" stroke="#e8ffc6" stroke-width="2"/></svg>
        `;
    }
}

class PlaylistWindow extends HTMLElement {

    constructor() {
        super();
        this.attachShadow({ mode: 'open' });
        this.shadowRoot.innerHTML = `
            <style>
                ${BASE}
                :host { display: flex; height: 100vh; background: #40484d; }
                .edge { width: 16px; flex: none; display: flex; flex-direction: column; align-items: center; justify-content: center; gap: 4px; background: #454c53; border: 1px solid #2f373c; border-top: 2px solid #535d61; }
                .edge i { width: 4px; height: 4px; background: #2f373c; }
                .app { flex: 1; min-width: 0; display: flex; flex-direction: column; }
                .work { flex: 1; min-height: 0; display: flex; gap: 9px; padding: 0 12px 0 0; background: linear-gradient(#434b50, #40474d); }
                .playlist { flex: 1; min-width: 0; display: grid; grid-template-columns: 224px 1fr 40px; grid-template-rows: 80px 1fr; margin-bottom: 10px; border-left: 2px solid #1d272d; border-bottom: 3px solid #1d272d; }
                .tab { display: flex; background: #1d272d; gap: 2px; padding: 0 2px 2px 0; }
                .slant { display: flex; background: linear-gradient(105deg, #434b50 19px, #1d272d 19px); }
                .add { width: 60px; padding: 30px 0 0 8px; background: #50585e; clip-path: polygon(0 100%, 30% 7%, 38% 0, 100% 0, 100% 100%); color: #d6dadd; }
                .modes { flex: 1; display: grid; grid-template-columns: repeat(3, 1fr); place-items: center; background: #50585e; border: 2px solid #646c71; padding-left: 2px; color: #6d767a; }
                .modes .on { color: #d6dadd; }
                .top { display: flex; flex-direction: column; gap: 4px; min-width: 0; background: #323d45; margin-right: 2px; }
                .map { display: flex; height: 38px; gap: 1px; }
                .box { background: #50585e; border: 2px solid #646c71; color: #1b242b; width: 38px; height: 38px; }
                .side { display: flex; flex-direction: column; gap: 2px; background: #1d272d; padding-right: 2px; }
                .side.low { gap: 0; }
                .rail { flex: 1; background: repeating-linear-gradient(45deg, #343c43 0 2px, #393f46 2px 4px); }
                .thumb { height: 67px; flex: none; }
                .tracks { grid-column: 1 / 3; min-height: 0; display: flex; flex-direction: column; overflow: hidden; background: #1b262d; margin-right: 2px; }
                .desk { height: 17px; flex: none; border-top: 1px solid #2b3237; background: linear-gradient(90deg, #5d646b, #666d75 60%, #5f666d); }
                .desk svg { width: 100%; height: 8px; }
            </style>
            <div class="edge"><i></i><i></i><i></i><i></i><i></i></div>
            <div class="app">
                <playlist-toolbar></playlist-toolbar>
                <div class="work">
                    <pattern-picker></pattern-picker>
                    <div class="playlist">
                        <div class="tab">
                            <div class="slant"><button class="add" aria-label="Add track">${icon('plus', 16, 16)}</button></div>
                            <div class="modes">
                                <button class="on" aria-label="Audio clips">${icon('wave', 42, 29)}</button>
                                <button aria-label="Automation clips">${icon('automation', 32, 27)}</button>
                                <button aria-label="Pattern clips">${icon('piano', 30, 22)}</button>
                                <button class="on" aria-label="Crossfade">${icon('cross', 20, 19)}</button>
                                <button aria-label="Curve">${icon('curve', 20, 19)}</button>
                                <button aria-label="Stretch">${icon('stretch', 20, 14)}</button>
                            </div>
                        </div>
                        <div class="top">
                            <div class="map">
                                <button class="box" aria-label="Scroll left">${icon('left', 10, 18)}</button>
                                <playlist-map></playlist-map>
                                <button class="box" aria-label="Scroll right">${icon('right', 10, 18)}</button>
                            </div>
                            <time-ruler></time-ruler>
                        </div>
                        <div class="side">
                            <button class="box" aria-label="Zoom">${icon('grip', 4, 8)}</button>
                            <button class="box" aria-label="Scroll up">${icon('up', 18, 10)}</button>
                        </div>
                        <div class="tracks"></div>
                        <div class="side low">
                            <div class="box thumb"></div>
                            <div class="rail"></div>
                            <button class="box" aria-label="Scroll down">${icon('down', 18, 10)}</button>
                        </div>
                    </div>
                </div>
                <div class="desk">
                    <svg viewBox="0 0 2864 8" preserveAspectRatio="none"><path d="M1001 0L998 6M1285 0V6H1288M1462 0V6H1459M1653 0V6M1672 0V6M1844 0V6H1847M1936 0V6H1933" fill="none" stroke="#363f49" stroke-width="2"/></svg>
                </div>
            </div>
        `;
        const tracks = this.shadowRoot.querySelector('.tracks');
        TRACKS.forEach(track => {
            const row = document.createElement('playlist-track');
            row.track = track;
            tracks.append(row);
        });
    }
}

customElements.define('playlist-clip', PlaylistClip);
customElements.define('playlist-track', PlaylistTrack);
customElements.define('pattern-item', PatternItem);
customElements.define('pattern-picker', PatternPicker);
customElements.define('playlist-toolbar', PlaylistToolbar);
customElements.define('playlist-map', PlaylistMap);
customElements.define('time-ruler', TimeRuler);
customElements.define('playlist-window', PlaylistWindow);
</script>
</body>
</html>
